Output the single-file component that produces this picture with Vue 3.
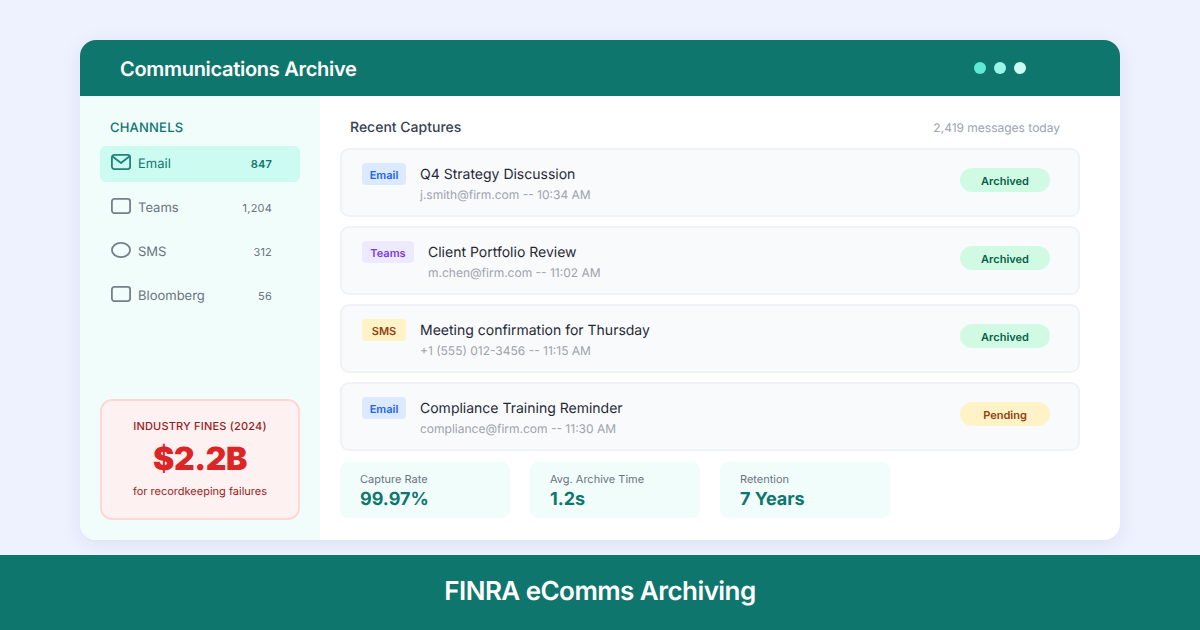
<script setup>
const channels = [
  { name: 'Email', count: '847', icon: 'mail', active: true },
  { name: 'Teams', count: '1,204', icon: 'box' },
  { name: 'SMS', count: '312', icon: 'oval' },
  { name: 'Bloomberg', count: '56', icon: 'box' }
]

const captures = [
  { tag: 'Email', title: 'Q4 Strategy Discussion', meta: 'j.smith@firm.com -- 10:34 AM', status: 'Archived' },
  { tag: 'Teams', title: 'Client Portfolio Review', meta: 'm.chen@firm.com -- 11:02 AM', status: 'Archived' },
  { tag: 'SMS', title: 'Meeting confirmation for Thursday', meta: '+1 (555) 012-3456 -- 11:15 AM', status: 'Archived' },
  { tag: 'Email', title: 'Compliance Training Reminder', meta: 'compliance@firm.com -- 11:30 AM', status: 'Pending' }
]

const stats = [
  { label: 'Capture Rate', value: '99.97%' },
  { label: 'Avg. Archive Time', value: '1.2s' },
  { label: 'Retention', value: '7 Years' }
]
</script>

<template>
  <div class="page">
    <div class="stage">
      <div class="window">
        <header class="window__head">
          <h1 class="window__title">Communications Archive</h1>
          <div class="dots">
            <span class="dot dot--1"></span>
            <span class="dot dot--2"></span>
            <span class="dot dot--3"></span>
          </div>
        </header>

        <div class="window__body">
          <aside class="side">
            <div class="side__label">CHANNELS</div>
            <ul class="channels">
              <li
                v-for="c in channels"
                :key="c.name"
                class="channel"
                :class="{ 'channel--active': c.active }"
              >
                <svg class="channel__icon" width="22" height="18" viewBox="0 0 22 18" fill="none">
                  <template v-if="c.icon === 'mail'">
                    <rect x="1.9" y="1.9" width="18.2" height="14.2" rx="2.5" />
                    <path d="M2 3 L11 10 L20 3" />
                  </template>
                  <rect v-else-if="c.icon === 'box'" x="1.9" y="1.9" width="18.2" height="14.2" rx="2.5" />
                  <ellipse v-else cx="11" cy="9" rx="9.1" ry="7.1" />
                </svg>
                <span class="channel__name">{{ c.name }}</span>
                <span class="channel__count">{{ c.count }}</span>
              </li>
            </ul>

            <div class="fines">
              <div class="fines__label">INDUSTRY FINES (2024)</div>
              <div class="fines__value">$2.2B</div>
              <div class="fines__note">for recordkeeping failures</div>
            </div>
          </aside>

          <main class="main">
            <div class="main__head">
              <h2 class="main__title">Recent Captures</h2>
              <span class="main__count">2,419 messages today</span>
            </div>

            <div class="rows">
              <div v-for="r in captures" :key="r.title" class="row">
                <span class="tag" :class="'tag--' + r.tag.toLowerCase()">{{ r.tag }}</span>
                <div class="row__text">
                  <div class="row__title">{{ r.title }}</div>
                  <div class="row__meta">{{ r.meta }}</div>
                </div>
                <span class="status" :class="'status--' + r.status.toLowerCase()">{{ r.status }}</span>
              </div>
            </div>

            <div class="stats">
              <div v-for="s in stats" :key="s.label" class="stat">
                <div class="stat__label">{{ s.label }}</div>
                <div class="stat__value">{{ s.value }}</div>
              </div>
            </div>
          </main>
        </div>
      </div>
    </div>

    <footer class="banner">FINRA eComms Archiving</footer>
  </div>
</template>

<style>
html,
body {
  margin: 0;
  background: #eef2ff;
}
</style>

<style scoped>
.page {
  width: 1200px;
  height: 630px;
  display: flex;
  flex-direction: column;
  background: #eef2ff;
  font-family: Inter, 'Liberation Sans', sans-serif;
  text-rendering: geometricPrecision;
  overflow: hidden;
}

.stage {
  flex: 1;
  padding: 40px 80px 15px;
  box-sizing: border-box;
  min-height: 0;
}

.window {
  height: 500px;
  display: flex;
  flex-direction: column;
  border-radius: 16px;
  background: #fff;
  box-shadow: 0 4px 20px rgba(15, 23, 80, 0.08);
  overflow: hidden;
}

.window__head {
  height: 56px;
  flex: none;
  display: flex;
  align-items: center;
  justify-content: space-between;
  padding: 0 94px 0 40px;
  background: #0f766e;
}

.window__title {
  margin: 2px 0 0;
  font-size: 20px;
  font-weight: 600;
  letter-spacing: -0.3px;
  color: #fff;
}

.dots {
  display: flex;
  gap: 8px;
}

.dot {
  width: 12px;
  height: 12px;
  border-radius: 50%;
}

.dot--1 { background: #5eead4; }
.dot--2 { background: #99f6e4; }
.dot--3 { background: #ccfbf1; }

.window__body {
  flex: 1;
  display: flex;
  min-height: 0;
}

.side {
  width: 240px;
  flex: none;
  box-sizing: border-box;
  padding: 24px 20px 20px;
  display: flex;
  flex-direction: column;
  background: #f0fdfa;
}

.side__label {
  padding-left: 10px;
  font-size: 13px;
  line-height: 16px;
  font-weight: 500;
  letter-spacing: 0.2px;
  color: #0f766e;
}

.channels {
  list-style: none;
  margin: 10px 0 0;
  padding: 0;
  display: flex;
  flex-direction: column;
  gap: 8px;
}

.channel {
  height: 36px;
  display: flex;
  align-items: center;
  padding: 0 28px 0 10px;
  border-radius: 6px;
  font-size: 13px;
  line-height: 34px;
  color: #6b7280;
}

.channel--active {
  background: #ccfbf1;
  color: #0f766e;
}

.channel__icon {
  flex: none;
  margin-right: 6px;
  position: relative;
  top: -2px;
  stroke: #6b7280;
  stroke-width: 1.8;
  stroke-linejoin: round;
  opacity: 0.9;
}

.channel--active .channel__icon {
  stroke: #0f766e;
}

.channel__name {
  flex: 1;
}

.channel__count {
  font-size: 11px;
  letter-spacing: 0.2px;
}

.channel--active .channel__count {
  font-weight: 600;
}

.fines {
  margin-top: auto;
  height: 121px;
  box-sizing: border-box;
  padding: 18px 0 0;
  border: 2px solid #fed7d7;
  border-radius: 12px;
  background: #fef1f1;
  text-align: center;
}

.fines__label {
  font-size: 11px;
  line-height: 14px;
  font-weight: 500;
  letter-spacing: 0.2px;
  color: #991b1b;
}

.fines__value {
  margin-top: 7px;
  font-size: 32px;
  line-height: 38px;
  font-weight: 900;
  letter-spacing: -0.4px;
  color: #dc2626;
}

.fines__note {
  margin-top: 6px;
  font-size: 11px;
  line-height: 14px;
  color: #991b1b;
}

.main {
  flex: 1;
  min-width: 0;
  padding: 23px 40px 0 20px;
}

.main__head {
  height: 16px;
  display: flex;
  align-items: center;
  justify-content: space-between;
  padding: 0 20px 0 10px;
}

.main__title {
  margin: 0;
  font-size: 14px;
  font-weight: 500;
  color: #374151;
}

.main__count {
  font-size: 12px;
  color: #9ca3af;
}

.rows {
  margin-top: 13px;
  display: flex;
  flex-direction: column;
  gap: 9px;
}

.row {
  height: 69px;
  box-sizing: border-box;
  display: flex;
  align-items: flex-start;
  padding: 13px 28px 0 20px;
  border: 2px solid #f1f2f5;
  border-radius: 9px;
  background: #f9fafb;
}

.tag {
  flex: none;
  height: 22px;
  margin-right: 14px;
  border-radius: 4px;
  text-align: center;
  font-size: 11px;
  line-height: 25px;
  font-weight: 600;
}

.tag--email { width: 44px; background: #dbeafe; color: #2563eb; }
.tag--teams { width: 52px; background: #ede9fe; color: #7c3aed; }
.tag--sms { width: 44px; background: #fef3c7; color: #92400e; }

.row__text {
  flex: 1;
  min-width: 0;
  padding-top: 3px;
}

.row__title {
  font-size: 14px;
  line-height: 18px;
  font-weight: 400;
  color: #1f2937;
}

.row__meta {
  margin-top: 3px;
  font-size: 12px;
  line-height: 15px;
  color: #9ca3af;
}

.status {
  flex: none;
  width: 90px;
  height: 24px;
  margin-top: 5px;
  border-radius: 12px;
  text-align: center;
  font-size: 11px;
  line-height: 26px;
  font-weight: 600;
}

.status--archived { background: #d1fae5; color: #065f46; }
.status--pending { background: #fef3c7; color: #92400e; }

.stats {
  margin-top: 11px;
  display: flex;
  gap: 20px;
}

.stat {
  width: 170px;
  height: 56px;
  box-sizing: border-box;
  padding: 11px 20px 0;
  border-radius: 8px;
  background: #f0fdfa;
}

.stat__label {
  font-size: 11px;
  line-height: 13px;
  color: #6b7280;
}

.stat__value {
  margin-top: 3px;
  font-size: 18px;
  line-height: 22px;
  font-weight: 700;
  color: #0f766e;
}

.banner {
  height: 75px;
  flex: none;
  box-sizing: border-box;
  padding-bottom: 3px;
  display: flex;
  align-items: center;
  justify-content: center;
  background: #0f766e;
  color: #fff;
  font-size: 26px;
  font-weight: 600;
  letter-spacing: -0.55px;
}
</style>
